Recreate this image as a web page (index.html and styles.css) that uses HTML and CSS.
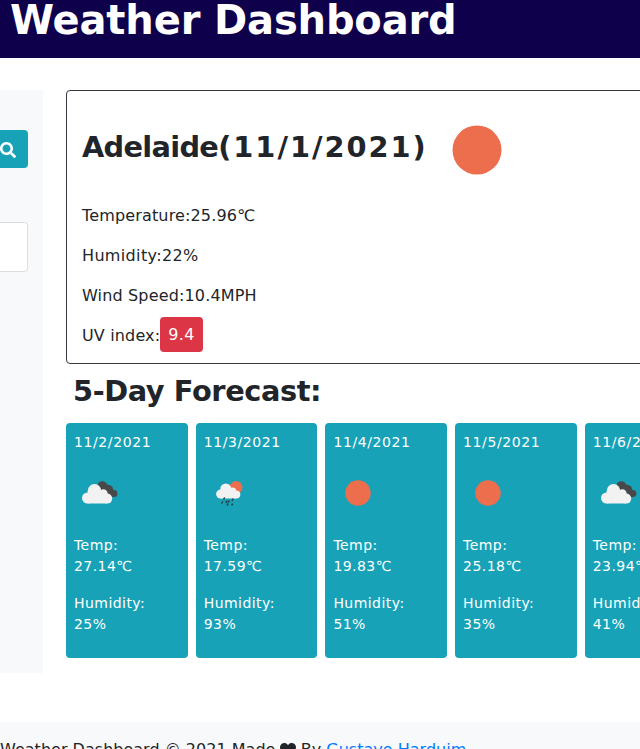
FILE: index.html
```html
<!DOCTYPE html>
<html lang="en">
<head>
<meta charset="utf-8">
<title>Weather Dashboard</title>
<link rel="stylesheet" href="styles.css">
</head>
<body>
<svg class="defs" aria-hidden="true">
  <symbol id="clouds" viewBox="0 0 36 23">
    <g fill="#48484a"><circle cx="20.3" cy="5" r="4.8"/><circle cx="26.5" cy="8.5" r="4.6"/><circle cx="31.8" cy="12.5" r="3.6"/><path d="M18 8 25 3 34 11 33 16H24Z"/></g>
    <g fill="#f2f2f2"><circle cx="12.5" cy="9.8" r="6.7"/><circle cx="5.6" cy="17" r="5.6"/><circle cx="21.4" cy="12.5" r="4.2"/><circle cx="25.2" cy="17.6" r="5"/><path d="M5.6 10H22l3 12.6H5.6Z"/></g>
  </symbol>
  <symbol id="rain" viewBox="0 0 27 26">
    <circle cx="20" cy="6.5" r="6.5" fill="#ec6e4c"/>
    <g fill="#f2f2f2"><circle cx="9.8" cy="7.9" r="5.5"/><circle cx="4.7" cy="13" r="4.6"/><circle cx="16.7" cy="10" r="3.5"/><circle cx="20.2" cy="13.5" r="4.1"/><path d="M4.700 8H17l3 9.600H4.700Z"/></g>
    <path d="m8.400 17-.5 1m-1.500 3-.5 1m4.800-1.800-.5 1.100m2.800-1.300-.6 1m4.500-2.800-.6 1.200m-4.500 3.700-.4 1m5-1-.4.800" fill="none" stroke="#26464e" stroke-width="1.600" stroke-linecap="round"/>
  </symbol>
  <symbol id="sun" viewBox="0 0 50 50"><circle cx="25" cy="25" r="24.5" fill="#ec6e4c"/></symbol>
</svg>
<header class="banner"><h1>Weather Dashboard</h1></header>
<main class="layout">
  <aside class="sidebar">
    <button class="search" aria-label="Search"><svg viewBox="0 0 512 512"><path fill="#fff" d="M505 442.700 405.300 343c-4.500-4.500-10.600-7-17-7H372c27.600-35.300 44-79.700 44-128C416 93.100 322.900 0 208 0S0 93.100 0 208s93.100 208 208 208c48.300 0 92.700-16.400 128-44v16.300c0 6.400 2.500 12.500 7 17l99.700 99.700c9.400 9.400 24.600 9.400 33.900 0l28.300-28.300c9.400-9.400 9.400-24.600.1-34zM208 336c-70.700 0-128-57.200-128-128 0-70.700 57.200-128 128-128 70.700 0 128 57.200 128 128 0 70.700-57.200 128-128 128z"/></svg></button>
    <div class="history"></div>
  </aside>
  <div class="content">
    <section class="current">
      <div class="city"><h2>Adelaide<span class="date">(11/1/2021)</span></h2><svg class="today"><use href="#sun"/></svg></div>
      <p>Temperature:25.96℃</p>
      <p class="humidity">Humidity:22%</p>
      <p>Wind Speed:10.4MPH</p>
      <p class="uv-row">UV index:<span class="uv">9.4</span></p>
    </section>
    <h2 class="forecast-title">5-Day Forecast:</h2>
    <section class="forecast">
      <article class="day"><p class="when">11/2/2021</p><svg class="cloudy"><use href="#clouds"/></svg><p>Temp:<br>27.14℃</p><p>Humidity:<br>25%</p></article>
      <article class="day"><p class="when">11/3/2021</p><svg class="rainy"><use href="#rain"/></svg><p>Temp:<br>17.59℃</p><p>Humidity:<br>93%</p></article>
      <article class="day"><p class="when">11/4/2021</p><svg class="sunny"><use href="#sun"/></svg><p>Temp:<br>19.83℃</p><p>Humidity:<br>51%</p></article>
      <article class="day"><p class="when">11/5/2021</p><svg class="sunny"><use href="#sun"/></svg><p>Temp:<br>25.18℃</p><p>Humidity:<br>35%</p></article>
      <article class="day"><p class="when">11/6/2021</p><svg class="cloudy"><use href="#clouds"/></svg><p>Temp:<br>23.94℃</p><p>Humidity:<br>41%</p></article>
    </section>
  </div>
</main>
<footer class="footer"><p>Weather Dashboard © 2021 Made <svg class="heart" viewBox="0 0 512 512"><path fill="#212529" d="M462.300 62.600C407.500 15.900 326 24.300 275.700 76.200L256 96.500l-19.700-20.300C186.100 24.300 104.500 15.900 49.700 62.600c-62.800 53.600-66.100 149.800-9.900 207.900l193.500 199.800c12.500 12.900 32.800 12.900 45.300 0l193.500-199.800c56.300-58.100 53-154.300-9.800-207.900z"/></svg> By <a href="#">Gustavo Harduim</a></p></footer>
</body>
</html>
```
FILE: styles.css
```css
* { box-sizing: border-box; }
html, body { height: 749px; overflow: hidden; }
body { margin: 0; background: #fff; color: #212529; font: 16px/24px Verdana, "DejaVu Sans", sans-serif; }
h1, h2, p { margin: 0; white-space: nowrap; }
.defs { display: none; }
.banner { height: 58px; padding-left: 10px; background: #0f004b; color: #fff; }
h1 { font-size: 40px; line-height: 40px; font-weight: 700; letter-spacing: -0.15px; }
.layout { display: flex; gap: 23px; margin-top: 32px; height: 583px; }
.sidebar { flex: 0 0 43px; padding: 40px 15px 0 0; background: #f8f9fa; }
.search { display: flex; align-items: center; justify-content: flex-end; width: 28px; height: 38px; margin: 0; padding: 2px 12px 0 0; border: 0; border-radius: 0 4px 4px 0; background: #17a2b8; }
.search svg { flex: 0 0 16px; height: 16px; }
.history { height: 50px; margin-top: 54px; border: 1px solid #dcdfe2; border-left: 0; border-radius: 0 4px 4px 0; background: #fff; }
.content { flex: 0 0 650px; }
.current { height: 274px; padding: 9px 15px 0; border: 1px solid #343a40; border-radius: 4px; letter-spacing: 0.15px; }
.city { display: flex; align-items: center; gap: 24px; height: 100px; margin-bottom: 4px; }
h2 { font-size: 28.800px; line-height: 35px; font-weight: 700; }
.city h2 { margin-bottom: 5px; letter-spacing: -0.7px; }
.date { letter-spacing: 2px; }
.today { width: 50px; height: 50px; margin-bottom: 1px; }
.current p { height: 24px; margin-bottom: 16px; }
.current .humidity { letter-spacing: 0.35px; }
.current .uv-row { display: flex; align-items: center; }
.uv { height: 35px; margin-bottom: 3px; padding: 5px 8px; border-radius: 4px; background: #dc3545; color: #fff; line-height: 25px; letter-spacing: 0.3px; }
.forecast-title { margin: 10px 0 14px 7px; letter-spacing: -0.4px; }
.forecast { display: flex; gap: 8px; }
.day { flex: 0 0 121.700px; height: 235px; padding: 9px 8px 0; border-radius: 4px; background: #17a2b8; color: #fff; font-size: 14px; line-height: 21px; letter-spacing: 0.45px; }
.day p { margin-bottom: 16px; }
.day svg { display: block; }
.cloudy { width: 36px; height: 23px; margin: 28px 0 31px 8px; }
.rainy { width: 27px; height: 26px; margin: 28px 0 28px 12px; }
.sunny { width: 26px; height: 26px; margin: 27px 0 29px 12px; }
.day .when { letter-spacing: 0.6px; }
.footer { height: 76px; margin-top: 49px; padding-top: 16px; background: #f8f9fa; }
.footer p { letter-spacing: 0.02px; }
.heart { width: 16px; height: 16px; margin-left: -1px; vertical-align: -3px; }
a { color: #007bff; text-decoration: none; }
```
